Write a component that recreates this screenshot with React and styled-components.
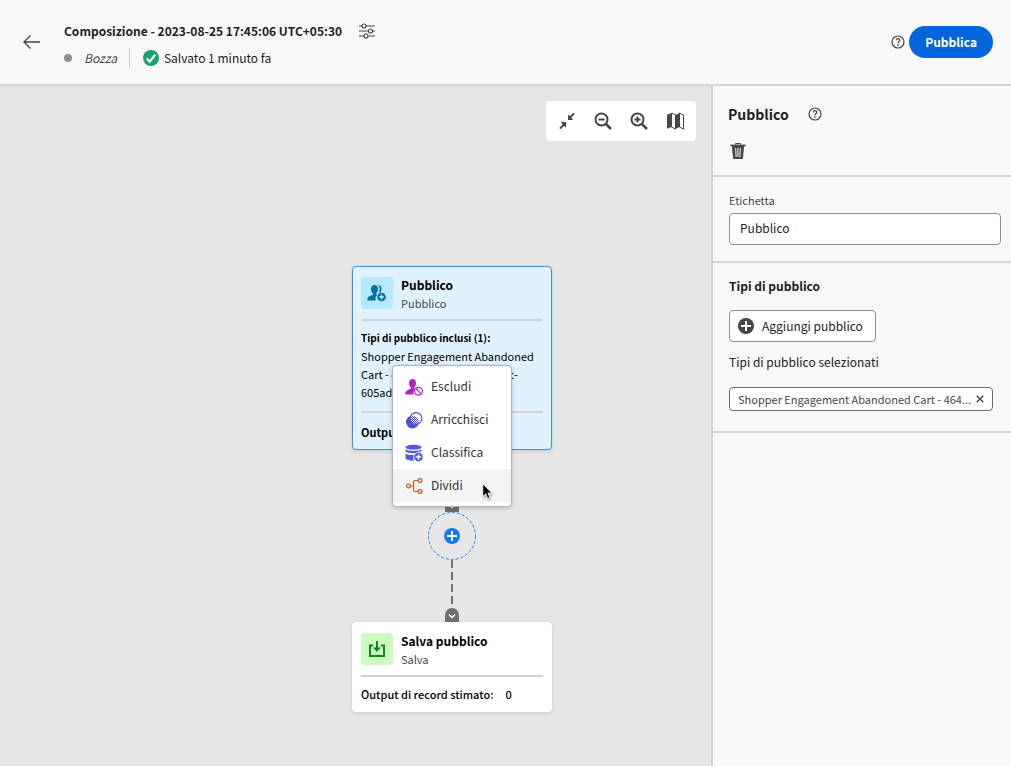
import React, { useState } from 'react';
import styled, { createGlobalStyle, css } from 'styled-components';

const GlobalStyle = createGlobalStyle`
	* {
		box-sizing: border-box;
	}
	body {
		margin: 0;
		font-family: 'Noto Sans CJK SC', 'Noto Sans', sans-serif;
		font-size: 12px;
		color: #222;
		background: #f8f8f8;
	}
	button,
	input {
		font-family: inherit;
	}
	h1, h2, h3, p {
		margin: 0;
	}
`;

const Page = styled.div`
	display: flex;
	flex-direction: column;
	min-height: 100vh;
`;

const Header = styled.header`
	display: flex;
	align-items: center;
	height: 86px;
	padding: 0 18px 0 22px;
	background: #f8f8f8;
	border-bottom: 2px solid #d5d5d5;
`;

const IconButton = styled.button`
	display: flex;
	align-items: center;
	justify-content: center;
	width: ${({ $size }) => $size || 20}px;
	height: ${({ $size }) => $size || 20}px;
	padding: 0;
	border: 0;
	background: none;
	color: #464646;
	cursor: pointer;
`;

const HeaderText = styled.div`
	flex: 1;
	margin-left: 22px;
	padding-top: 4px;
`;

const TitleRow = styled.div`
	display: flex;
	align-items: center;
	gap: 15px;
	height: 28px;
`;

const Title = styled.h1`
	font-size: 12px;
	line-height: 20px;
	font-weight: 700;
`;

const StatusRow = styled.div`
	display: flex;
	align-items: center;
	height: 26px;
	line-height: 20px;
`;

const Dot = styled.span`
	width: 8px;
	height: 8px;
	margin-right: 12px;
	border-radius: 50%;
	background: #909090;
`;

const Draft = styled.em`
	padding-right: 12px;
	margin-right: 13px;
	border-right: 1px solid #d0d0d0;
	color: #464646;
`;

const Saved = styled.span`
	display: flex;
	align-items: center;
	gap: 5px;
`;

const PublishButton = styled.button`
	height: 32px;
	margin-left: 1px;
	padding: 0 16px;
	border: 0;
	border-radius: 16px;
	background: #0265dc;
	color: #fff;
	font-size: 12px;
	line-height: 20px;
	font-weight: 700;
	cursor: pointer;
`;

const Main = styled.main`
	display: flex;
	flex: 1;
`;

const Canvas = styled.section`
	position: relative;
	flex: 1;
	background: #e6e6e6;
	overflow: hidden;
`;

const Toolbar = styled.div`
	position: absolute;
	top: 15px;
	right: 15px;
	display: flex;
	align-items: center;
	gap: 16px;
	height: 40px;
	padding: 0 11px;
	border-radius: 4px;
	background: #fff;
`;

const Node = styled.div`
	position: absolute;
	left: ${({ $x }) => $x}px;
	top: ${({ $y }) => $y}px;
`;

const Card = styled.article`
	width: 200px;
	padding: 10px 8px 8px;
	border: 1px solid #fff;
	border-radius: 4px;
	background: #fff;
	box-shadow: 0 1px 4px rgba(0, 0, 0, 0.12);
	color: #000;
	${({ $selected }) =>
		$selected &&
		css`
			border-color: #378ef0;
			background: #e0f2ff;
		`}
`;

const CardHead = styled.div`
	display: flex;
	gap: 8px;
	height: 32px;
`;

const CardIcon = styled.div`
	display: flex;
	align-items: center;
	justify-content: center;
	width: 32px;
	height: 32px;
	border-radius: 4px;
	background: ${({ $bg }) => $bg};
`;

const CardTitle = styled.h3`
	font-size: 12px;
	line-height: 16px;
	font-weight: 700;
`;

const CardSub = styled.p`
	color: #464646;
	font-size: 11px;
	line-height: 20px;
`;

const CardRule = styled.hr`
	height: 2px;
	margin: 10px 0 ${({ $below }) => $below || 8}px;
	border: 0;
	background: #d3d3d3;
`;

const CardText = styled.p`
	font-size: ${({ $bold }) => ($bold ? 10 : 11)}px;
	line-height: 18px;
	font-weight: ${({ $bold }) => ($bold ? 700 : 400)};
	white-space: nowrap;
`;

const Output = styled.div`
	display: flex;
	gap: 12px;
	font-size: 11px;
	line-height: 18px;
	font-weight: ${({ $strong }) => ($strong ? 700 : 500)};
	white-space: nowrap;
`;

const Connector = styled.div`
	width: 2px;
	height: 44px;
	background: repeating-linear-gradient(#747474 0 8px, transparent 8px 12px);
`;

const Handle = styled.div`
	display: flex;
	align-items: center;
	justify-content: center;
	width: 14px;
	height: 14px;
	padding-top: 2px;
	border-radius: 7px 7px 0 0;
	background: #6e6e6e;
`;

const AddNode = styled.button`
	display: block;
	width: 48px;
	height: 48px;
	padding: 0;
	border: 0;
	background: none;
	cursor: pointer;
`;

const Menu = styled.div`
	width: 120px;
	padding: 4px 0;
	border: 1px solid #b3b3b3;
	border-radius: 4px;
	background: #fff;
	box-shadow: 0 1px 4px rgba(0, 0, 0, 0.2);
`;

const MenuItem = styled.button`
	display: flex;
	align-items: center;
	gap: 8px;
	width: 100%;
	height: 33px;
	padding: 0 12px;
	border: 0;
	background: ${({ $active }) => ($active ? '#f4f4f4' : 'transparent')};
	color: #323232;
	font-size: 12px;
	line-height: 20px;
	text-align: left;
	cursor: pointer;
`;

const MenuLabel = styled.span`
	padding-bottom: 2px;
`;

const Panel = styled.aside`
	width: 300px;
	border-left: 2px solid #d5d5d5;
	background: #f8f8f8;
`;

const Section = styled.section`
	display: flex;
	flex-direction: column;
	align-items: flex-start;
	padding: ${({ $pad }) => $pad};
	border-bottom: 2px solid #d5d5d5;
`;

const PanelTitleRow = styled.div`
	display: flex;
	align-items: center;
	gap: 16px;
	height: 24px;
	margin-bottom: 15px;
`;

const PanelTitle = styled.h2`
	font-size: ${({ $small }) => ($small ? 12 : 14)}px;
	line-height: 20px;
	font-weight: 700;
`;

const FieldLabel = styled.label`
	color: #464646;
	font-size: 11px;
	line-height: 18px;
`;

const TextInput = styled.input`
	width: 100%;
	height: 32px;
	margin-top: 4px;
	padding: 0 10px 4px;
	border: 1px solid #8e8e8e;
	border-radius: 4px;
	background: #fff;
	color: #222;
	font-size: 12px;
`;

const AddButton = styled.button`
	display: flex;
	align-items: center;
	gap: 8px;
	height: 32px;
	margin: 14px 0 10px;
	padding: 0 12px 0 8px;
	border: 1px solid #8e8e8e;
	border-radius: 4px;
	background: #fff;
	color: #222;
	font-size: 12px;
	line-height: 20px;
	cursor: pointer;
`;

const SelectedLabel = styled.p`
	line-height: 20px;
`;

const Tag = styled.div`
	display: flex;
	align-items: center;
	justify-content: space-between;
	width: calc(100% - 8px);
	height: 24px;
	margin-top: 15px;
	padding: 0 4px 0 8px;
	border: 1px solid #6d6d6d;
	border-radius: 4px;
	background: #fff;
	color: #464646;
	font-size: 11px;
	line-height: 18px;
	white-space: nowrap;
`;

const Cursor = styled.svg`
	display: block;
	filter: drop-shadow(1px 2px 1px rgba(0, 0, 0, 0.3));
`;

const BackIcon = () => (
	<svg width='20' height='20' viewBox='0 0 20 20' fill='none' stroke='currentColor' strokeWidth='1.4'>
		<path d='M18 10H2M8.5 3.5L2 10l6.500 6.500' />
	</svg>
);

const SettingsIcon = () => (
	<svg width='18' height='18' viewBox='0 0 18 18' fill='none' stroke='currentColor' strokeWidth='1.1'>
		<path d='M1 4h3M8 4h9M1 9h9.500M14.500 9H17M1 14h5M10 14h7' />
		<circle cx='6' cy='4' r='2' />
		<circle cx='12.500' cy='9' r='2' />
		<circle cx='8' cy='14' r='2' />
	</svg>
);

const HelpIcon = () => (
	<svg width='14' height='14' viewBox='0 0 14 14' fill='none' stroke='currentColor' strokeWidth='1.2'>
		<circle cx='7' cy='7' r='6' />
		<path d='M5.300 5.300C5.400 4.300 6 3.700 7 3.700c1 0 1.700.6 1.700 1.500 0 1.300-1.700 1.400-1.700 3' />
		<path d='M6.300 10h1.400' strokeWidth='1.400' />
	</svg>
);

const CheckIcon = () => (
	<svg width='16' height='16' viewBox='0 0 16 16'>
		<circle cx='8' cy='8' r='8' fill='#12a570' />
		<path d='M3.800 8.600l3 3 5.400-7' fill='none' stroke='#fff' strokeWidth='2.200' />
	</svg>
);

const FitIcon = () => (
	<svg width='20' height='20' viewBox='0 0 20 20' fill='currentColor'>
		<path d='M11 9V3.500l1.800 1.800L16.300 1.700l1.400 1.400L14.200 6.700l2 2.300zM9 11v5.500l-1.800-1.800L3.700 18.300l-1.400-1.400L5.800 13.300l-2-2.300z' />
	</svg>
);

const ZoomIcon = ({ plus }) => (
	<svg width='20' height='20' viewBox='0 0 20 20' fill='none' stroke='currentColor' strokeWidth='2'>
		<circle cx='8.500' cy='8.500' r='6' />
		<path d='M13 13l5 5' strokeWidth='2.500' />
		<path d={plus ? 'M5.500 8.500h6M8.500 5.500v6' : 'M5.500 8.500h6'} />
	</svg>
);

const MapIcon = () => (
	<svg width='20' height='20' viewBox='0 0 20 20'>
		<path d='M2 3.800L6.500 2v14L2 17.800zM10.500 4l4-2v14l-4 2z' fill='currentColor' />
		<path d='M6.500 2l4 2v14l-4-2zM14.500 2l4 2v14l-4-2z' fill='none' stroke='currentColor' />
	</svg>
);

const TrashIcon = () => (
	<svg width='18' height='18' viewBox='0 0 18 18' fill='none' stroke='currentColor'>
		<path d='M6.500 2.500v-1h5v1' />
		<path d='M1.500 3.500h15' strokeWidth='1.800' />
		<path d='M3.500 4h11l-1 12.500h-9z' fill='currentColor' />
		<path d='M6.700 6l.4 9M9 6v9M11.300 6l-.4 9' stroke='#f8f8f8' />
	</svg>
);

const PlusCircle = ({ color }) => (
	<svg width='16' height='16' viewBox='0 0 16 16'>
		<circle cx='8' cy='8' r='8' fill={color} />
		<path d='M8 3v10M3 8h10' stroke='#fff' strokeWidth='2' />
	</svg>
);

const PersonPath = 'M7.500 1C5.200 1 4 2.800 4 5c0 1.900.8 3.500 1.700 4.400.5.500.3 1.300-.4 1.600C2.400 12.100.4 13 .4 15v1.500h8.300a5.500 5.500 0 0 1 1.500-5.600c-1-.3-1.200-1-.7-1.600C10.400 8.300 11 6.800 11 5c0-2.200-1.200-4-3.500-4z';

const AudienceIcon = () => (
	<svg width='20' height='18' viewBox='0 0 20 18'>
		<path d={PersonPath} fill='#0072a6' />
		<path d='M10.800 1c2.600 0 3.700 1.800 3.700 3.900 0 1.300-.3 2.400-1 3.300-.6.200-1.300.5-1.800.9.600-1.100 1-2.500 1-4.100 0-1.700-.7-3.100-1.900-4z' fill='#0072a6' />
		<circle cx='14.500' cy='13' r='4.300' fill='#0072a6' />
		<path d='M14.500 10.500v5M12 13h5' stroke='#b8e8fd' strokeWidth='1.300' />
	</svg>
);

const ExcludeIcon = () => (
	<svg width='18' height='18' viewBox='0 0 18 18'>
		<path d={PersonPath} fill='#b622b7' />
		<g fill='none' stroke='#b622b7' strokeWidth='1.200'>
			<circle cx='13.500' cy='13.200' r='3.900' />
			<path d='M10.900 10.500l5.200 5.400' />
		</g>
	</svg>
);

const EnrichIcon = () => (
	<svg width='18' height='18' viewBox='0 0 18 18'>
		<defs>
			<pattern id='dots' width='2' height='2' patternUnits='userSpaceOnUse'>
				<path d='M0 0h1v1H0zM1 1h1v1H1z' fill='#4b50df' />
			</pattern>
			<clipPath id='overlap'>
				<circle cx='7.500' cy='11' r='6.500' />
			</clipPath>
		</defs>
		<circle cx='7.500' cy='11' r='6.500' fill='#4b50df' />
		<circle cx='11' cy='7.500' r='5.900' fill='#fff' />
		<circle cx='11' cy='7.500' r='5.900' fill='url(#dots)' clipPath='url(#overlap)' />
		<circle cx='11' cy='7.500' r='5.900' fill='none' stroke='#4b50df' strokeWidth='1.100' />
	</svg>
);

const RankIcon = () => (
	<svg width='18' height='18' viewBox='0 0 18 18' fill='#5258e4'>
		<ellipse cx='8.500' cy='3.200' rx='8' ry='2.500' />
		<path d='M.5 5.200c3 2.300 13 2.300 16 0v2.500c-1.500-.6-4.500-.4-6 1.300-3.500.5-8 0-10-1.500zM.5 9.500c2 1.300 5 1.700 8.300 1.500a6 6 0 0 0 .2 5.600C5.500 16.800 1.500 16 .5 14.500z' />
		<circle cx='13.500' cy='13' r='4.400' />
		<path d='M13.500 10.200v5.600M10.700 13h5.600' stroke='#fff' strokeWidth='1.300' />
	</svg>
);

const SplitIcon = () => (
	<svg width='18' height='18' viewBox='0 0 18 18' fill='none' stroke='#be5a17' strokeWidth='1.200'>
		<circle cx='3.500' cy='9' r='1.900' />
		<circle cx='15' cy='3.500' r='1.900' />
		<circle cx='15' cy='14.500' r='1.900' />
		<path d='M5.500 9h3M13 3.500h-3q-1.500 0-1.500 1.500v8q0 1.500 1.500 1.500h3' />
	</svg>
);

const SaveIcon = () => (
	<svg width='18' height='18' viewBox='0 0 18 18' fill='none' stroke='#0d8a1f' strokeWidth='2'>
		<path d='M5 5.500H2V16h14V5.500h-3' />
		<path d='M9 1v7' />
		<path d='M5 7.500h8L9 12z' fill='#0d8a1f' stroke='none' />
	</svg>
);

const ChevronIcon = () => (
	<svg width='8' height='6' viewBox='0 0 8 6' fill='none' stroke='#fff' strokeWidth='1.500'>
		<path d='M1 1.500L4 4.500 7 1.500' />
	</svg>
);

const menuItems = [
	{ name: 'Escludi', icon: <ExcludeIcon /> },
	{ name: 'Arricchisci', icon: <EnrichIcon /> },
	{ name: 'Classifica', icon: <RankIcon /> },
	{ name: 'Dividi', icon: <SplitIcon />, active: true }
];

const TopBar = () => (
	<Header>
		<IconButton aria-label='Indietro'>
			<BackIcon />
		</IconButton>
		<HeaderText>
			<TitleRow>
				<Title>Composizione - 2023-08-25 17:45:06 UTC+05:30</Title>
				<IconButton aria-label='Impostazioni'>
					<SettingsIcon />
				</IconButton>
			</TitleRow>
			<StatusRow>
				<Dot />
				<Draft>Bozza</Draft>
				<Saved>
					<CheckIcon />
					Salvato 1 minuto fa
				</Saved>
			</StatusRow>
		</HeaderText>
		<IconButton aria-label='Aiuto'>
			<HelpIcon />
		</IconButton>
		<PublishButton>Pubblica</PublishButton>
	</Header>
);

const Flow = () => (
	<Canvas>
		<Toolbar>
			<IconButton aria-label='Adatta'>
				<FitIcon />
			</IconButton>
			<IconButton aria-label='Riduci'>
				<ZoomIcon />
			</IconButton>
			<IconButton aria-label='Ingrandisci'>
				<ZoomIcon plus />
			</IconButton>
			<IconButton aria-label='Mappa'>
				<MapIcon />
			</IconButton>
		</Toolbar>
		<Node $x={352} $y={180}>
			<Card $selected>
				<CardHead>
					<CardIcon $bg='#b8e8fd'>
						<AudienceIcon />
					</CardIcon>
					<div>
						<CardTitle>Pubblico</CardTitle>
						<CardSub>Pubblico</CardSub>
					</div>
				</CardHead>
				<CardRule />
				<CardText $bold>Tipi di pubblico inclusi (1):</CardText>
				<CardText>
					Shopper Engagement Abandoned
					<br />
					Cart - 4640b9e1-2f7d-4a510bc-
					<br />
					605ad
				</CardText>
				<CardRule $below={10} />
				<Output $strong>Output</Output>
			</Card>
		</Node>
		<Node $x={445} $y={412}>
			<Handle>
				<ChevronIcon />
			</Handle>
		</Node>
		<Node $x={428} $y={426}>
			<AddNode aria-label='Aggiungi'>
				<svg width='48' height='48' viewBox='0 0 48 48'>
					<circle cx='24' cy='24' r='23.500' fill='none' stroke='#1b7ef2' strokeDasharray='3 2' />
					<circle cx='24' cy='24' r='8' fill='#147af3' />
					<path d='M24 19v10M19 24h10' stroke='#fff' strokeWidth='2' />
				</svg>
			</AddNode>
		</Node>
		<Node $x={451} $y={474}>
			<Connector />
		</Node>
		<Node $x={445} $y={522}>
			<Handle>
				<ChevronIcon />
			</Handle>
		</Node>
		<Node $x={352} $y={536}>
			<Card>
				<CardHead>
					<CardIcon $bg='#cdfcbf'>
						<SaveIcon />
					</CardIcon>
					<div>
						<CardTitle>Salva pubblico</CardTitle>
						<CardSub>Salva</CardSub>
					</div>
				</CardHead>
				<CardRule />
				<Output>
					<span>Output di record stimato:</span>
					<span>0</span>
				</Output>
			</Card>
		</Node>
		<Node $x={392} $y={279}>
			<Menu>
				{menuItems.map((item) => (
					<MenuItem key={item.name} $active={item.active}>
						{item.icon}
						<MenuLabel>{item.name}</MenuLabel>
					</MenuItem>
				))}
			</Menu>
		</Node>
		<Node $x={482} $y={397}>
			<Cursor width='12' height='18' viewBox='0 0 12 18'>
				<path d='M.8.8v12.700l2.900-2.700 2 4.600 2.200-1-2-4.400h3.800z' fill='#000' stroke='#fff' strokeWidth='.8' />
			</Cursor>
		</Node>
	</Canvas>
);

const Sidebar = () => {
	const [ label, setLabel ] = useState('Pubblico');

	return (
		<Panel>
			<Section $pad='16px 15px 14px'>
				<PanelTitleRow>
					<PanelTitle>Pubblico</PanelTitle>
					<IconButton aria-label='Aiuto'>
						<HelpIcon />
					</IconButton>
				</PanelTitleRow>
				<IconButton aria-label='Elimina'>
					<TrashIcon />
				</IconButton>
			</Section>
			<Section $pad='14px 10px 16px 16px'>
				<FieldLabel htmlFor='label'>Etichetta</FieldLabel>
				<TextInput id='label' value={label} onChange={(e) => setLabel(e.target.value)} />
			</Section>
			<Section $pad='13px 10px 20px 16px'>
				<PanelTitle $small>Tipi di pubblico</PanelTitle>
				<AddButton>
					<PlusCircle color='#464646' />
					Aggiungi pubblico
				</AddButton>
				<SelectedLabel>Tipi di pubblico selezionati</SelectedLabel>
				<Tag>
					Shopper Engagement Abandoned Cart - 464...
					<IconButton $size={16} aria-label='Rimuovi'>
						<svg width='8' height='8' viewBox='0 0 8 8' stroke='currentColor' strokeWidth='1.400'>
							<path d='M.7.7l6.600 6.600M7.300.7L.7 7.300' />
						</svg>
					</IconButton>
				</Tag>
			</Section>
		</Panel>
	);
};

const App = () => (
	<>
		<GlobalStyle />
		<Page>
			<TopBar />
			<Main>
				<Flow />
				<Sidebar />
			</Main>
		</Page>
	</>
);

export default App;
